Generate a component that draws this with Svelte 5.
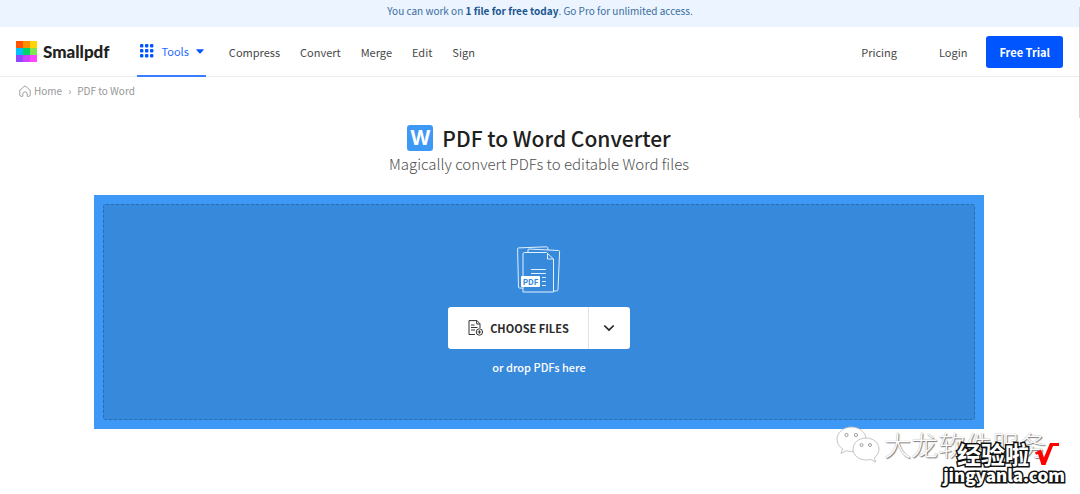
<script>
  const links = ['Compress', 'Convert', 'Merge', 'Edit', 'Sign'];
  const tiles = [
    ['#ff5300', '#ff8f00', '#ffd200'],
    ['#00c0ff', '#00d267', '#81e650'],
    ['#8f47ff', '#cb42ff', '#ff47ff']
  ];
  const dots = [0, 1, 2];
</script>

<div class="page">
  <p class="banner">You can work on <b>1 file for free today</b>. Go Pro for unlimited access.</p>

  <header>
    <a class="brand" href="#home">
      <svg width="21" height="21" viewBox="0 0 21 21" aria-hidden="true">
        {#each tiles as row, y}
          {#each row as fill, x}
            <rect x={x * 7} y={y * 7} width="7" height="7" {fill} />
          {/each}
        {/each}
      </svg>
      <span>Smallpdf</span>
    </a>
    <nav>
      <button class="tools">
        <svg width="14" height="14" viewBox="0 0 14 14" fill="#0055ff" aria-hidden="true">
          {#each dots as y}
            {#each dots as x}
              <rect x={x * 5} y={y * 5} width="3.4" height="3.4" rx="1" />
            {/each}
          {/each}
        </svg>
        <span>Tools</span>
        <svg width="8" height="5" viewBox="0 0 8 5" fill="#0055ff" aria-hidden="true">
          <path d="M.8.3h6.4q.8 0 .4.7L4.6 4.2q-.6.6-1.2 0L.4 1Q0 .3.8.3z" />
        </svg>
      </button>
      {#each links as link}
        <a href="#{link}">{link}</a>
      {/each}
    </nav>
    <div class="account">
      <a href="#pricing">Pricing</a>
      <a class="login" href="#login">Login</a>
      <button class="trial">Free Trial</button>
    </div>
  </header>

  <div class="crumbs">
    <a href="#home">
      <svg width="12" height="12" viewBox="0 0 12 12" fill="none" stroke="#a0a0a0" aria-hidden="true">
        <path d="M1 5L6 .8 11 5M.8 4.900V10q0 1.300 1.300 1.300h1.700V9a2.200 2.200 0 0 1 4.400 0v2.300h1.700q1.300 0 1.300-1.300V4.900" />
      </svg>
      Home
    </a>
    <span class="sep">›</span>
    <span>PDF to Word</span>
  </div>

  <main>
    <div class="title">
      <span class="badge">W</span>
      <h1>PDF to Word Converter</h1>
    </div>
    <p class="subtitle">Magically convert PDFs to editable Word files</p>

    <section class="drop">
      <div class="zone">
        <svg class="docs" width="44" height="48" viewBox="0 0 44 48" fill="none" stroke="#e3f0fd" aria-hidden="true">
          <path d="M6 42.200L2.500 42Q1.600 42 1.500 41L.6 3Q.6 2 1.600 1.900L29.500.8q1.200 0 1.300 1L31 4" />
          <path d="M11 6V4q0-1 1-1l29.500 1.500q1.200.1 1.100 1.200L41 43.500q-.1 1.600-1.600 1.500H37" />
          <path d="M6 31V8q0-1.500 1.500-1.500H29.500L36.500 13v33H6v-6M30.500 7V13H36.500" fill="#3789dc" />
          <path d="M14 23.500h15M14 27.500h15M25 31.500h4M25 35.500h4M25 39.500h4" />
          <rect x="4" y="30" width="19" height="11" rx="1" fill="#fff" stroke="none" />
          <text x="13.500" y="39">PDF</text>
        </svg>
        <div class="choose">
          <button class="files">
            <svg width="16" height="16" viewBox="0 0 16 16" fill="none" stroke="#333" aria-hidden="true">
              <path d="M7 14.500H1V.6h8l3 3.200V8M8.700.8V4H12M3 5h3.500M3 7.500h6.500M3 10h4" />
              <circle cx="11.400" cy="12" r="3.200" />
              <path d="M11.400 10.200v3.600M9.600 12h3.600" />
            </svg>
            CHOOSE FILES
          </button>
          <button class="more" aria-label="More sources">
            <svg width="12" height="8" viewBox="0 0 12 8" fill="none" stroke="#222" stroke-width="1.700" aria-hidden="true">
              <path d="M1.300 1.500L6 6l4.700-4.500" />
            </svg>
          </button>
        </div>
        <p>or drop PDFs here</p>
      </div>
    </section>
  </main>

  <div class="scroll"></div>

  <div class="wechat">
    <svg width="44" height="38" viewBox="0 0 44 38" aria-hidden="true">
      <g fill="#fff" stroke="#b5b5b5" stroke-width=".8">
        <path d="M15.500 1C7.500 1 1 6.500 1 13.300c0 4 2.200 7.300 5.600 9.600L5 27.500l5.300-2.800c1.700.5 3.400.8 5.200.8C23.500 25.500 30 20 30 13.300S23.500 1 15.500 1z" />
        <path d="M30 12c-7.200 0-13 5-13 11s5.800 11 13 11c1.600 0 3.200-.2 4.600-.7l5 2.700-1.300-4.300c2.900-2 4.700-5.200 4.700-8.700 0-6-5.800-11-13-11z" />
      </g>
      <g fill="#fff" stroke="#888" stroke-width=".8">
        <circle cx="10.500" cy="9" r="1.600" /><circle cx="20" cy="9" r="1.600" />
        <circle cx="25.500" cy="19" r="1.500" /><circle cx="34" cy="19" r="1.500" />
      </g>
    </svg>
    <span>大龙软件服务</span>
  </div>
  <div class="stamp">
    <div class="name">
      <span>经验啦</span>
      <svg width="24" height="24" viewBox="0 0 24 24" fill="#f00" aria-hidden="true">
        <path d="M0 10.500L6 7.500 9 15.500 15 1H24v3h-6L10.500 23H6.500L3 12l-2 .8z" />
      </svg>
    </div>
    <span class="site">jingyanla.com</span>
  </div>
</div>

<style>
  :global(body) { margin: 0; background: #fff; }
  .page {
    position: relative;
    min-height: 100vh;
    overflow: hidden;
    font: 11px/16px "Noto Sans CJK SC", "Open Sans", sans-serif;
    color: #484848;
  }
  p, h1 { margin: 0; }
  a { color: inherit; text-decoration: none; }
  button { font: inherit; color: inherit; border: 0; background: none; padding: 0; cursor: pointer; }
  svg { display: block; flex: none; }

  .banner {
    background: #ebf4ff;
    color: #3a6d9e;
    font-size: 10px;
    line-height: 22px;
    padding-bottom: 5px;
    text-align: center;
  }
  .banner b { color: #20568f; }

  header {
    display: flex;
    align-items: center;
    height: 49px;
    padding: 0 17px 0 16px;
    border-bottom: 1px solid #ececec;
  }
  .brand { display: flex; align-items: center; gap: 6px; }
  .brand span { font: 900 17px/20px Lato, sans-serif; color: #222; }
  nav { display: flex; align-items: center; gap: 20px; margin-left: 28px; align-self: stretch; }
  .tools {
    display: flex;
    align-items: center;
    gap: 7px;
    align-self: stretch;
    margin: 0 3px -1px 0;
    padding: 0 2px 0 3px;
    color: #1f6bff;
    border-bottom: 2px solid #3b7dff;
  }
  .account { display: flex; align-items: center; margin-left: auto; }
  .login { margin: 0 19px 0 42px; }
  .trial {
    height: 32px;
    padding: 0 13px;
    border-radius: 3px;
    background: #0055ff;
    color: #fff;
    font-weight: 700;
  }

  .crumbs {
    display: flex;
    gap: 6px;
    padding: 6px 19px;
    font-size: 10px;
    color: #979797;
  }
  .crumbs a { display: flex; align-items: center; gap: 3px; }

  main { padding: 19px 2px 0 0; text-align: center; }
  .title { display: flex; justify-content: center; align-items: center; gap: 9px; height: 28px; }
  .badge {
    width: 26px;
    border-radius: 3px;
    background: #3d99f5;
    color: #fff;
    font: 700 20px/26px Inter, sans-serif;
  }
  h1 { font-size: 21px; line-height: 28px; font-weight: 500; color: #202020; }
  .subtitle { font-size: 15px; line-height: 24px; font-weight: 300; color: #505050; }

  .drop {
    box-sizing: border-box;
    width: 82.6%;
    margin: 19px auto 0;
    padding: 9px;
    background: #3d99f5;
  }
  .zone {
    display: flex;
    flex-direction: column;
    align-items: center;
    padding: 41px 0 44px;
    border: 1px dashed #2b6cad;
    border-radius: 3px;
    background: #3789dc;
  }
  .docs text { font: 700 8px "Noto Sans CJK SC", sans-serif; text-anchor: middle; fill: #3789dc; stroke: none; }
  .choose { display: flex; height: 42px; margin: 13px 0 10px; border-radius: 3px; background: #fff; }
  .files {
    display: flex;
    align-items: center;
    gap: 6px;
    padding: 0 19px 0 20px;
    font-weight: 700;
    color: #2b2b2b;
  }
  .more { display: grid; place-items: center; width: 42px; border-left: 1px solid #e3e3e3; }
  .zone p { color: #fff; font-weight: 500; }

  .scroll { position: absolute; top: 7px; right: 0; width: 1px; height: 111px; background: #d4d4d4; }
  .wechat {
    position: absolute;
    right: 34px;
    bottom: 30px;
    display: flex;
    align-items: center;
    gap: 4px;
  }
  .wechat span {
    font-size: 27px;
    line-height: 38px;
    font-weight: 300;
    color: #fff;
    text-shadow: 1px 1px 1px #777, 0 0 1px #999;
  }
  .stamp { position: absolute; right: 15px; bottom: 10px; color: #fff; }
  .name { display: flex; align-items: center; justify-content: flex-end; gap: 6px; padding-right: 6px; }
  .name span, .site {
    -webkit-text-stroke: 3px #111;
    paint-order: stroke fill;
  }
  .name span { font-size: 24px; line-height: 24px; font-weight: 700; }
  .site { display: block; font: 900 17px/18px "Noto Sans CJK SC", sans-serif; }
</style>
